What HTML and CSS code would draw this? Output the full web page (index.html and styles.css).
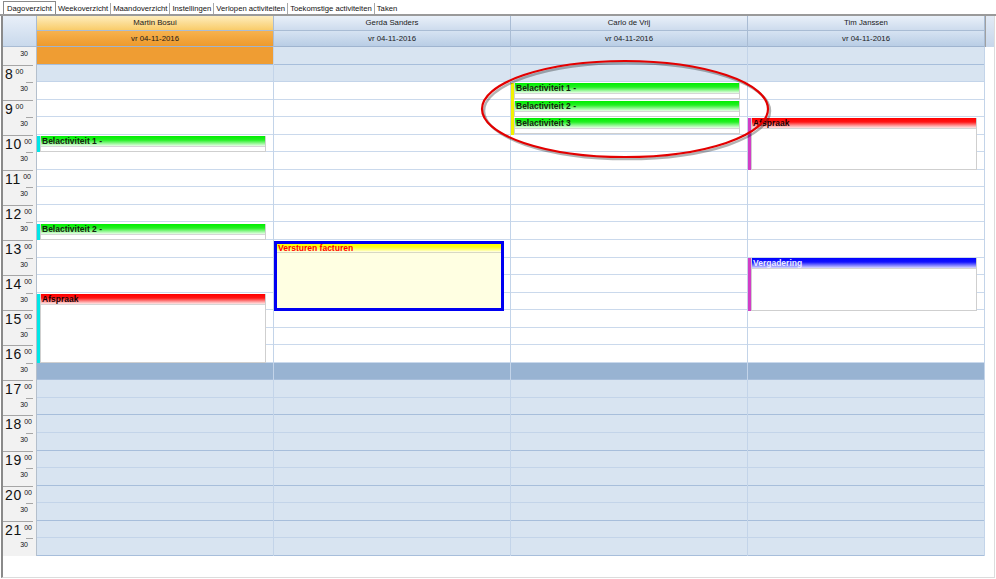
FILE: index.html
```html
<!DOCTYPE html>
<html>
<head>
  <title>Dagoverzicht</title>
  <link rel="stylesheet" href="styles.css">
</head>
<body>
  <div class="tabs">
    <span class="tab active">Dagoverzicht</span>
    <span class="tab">Weekoverzicht</span>
    <span class="tab">Maandoverzicht</span>
    <span class="tab">Instellingen</span>
    <span class="tab">Verlopen activiteiten</span>
    <span class="tab">Toekomstige activiteiten</span>
    <span class="tab">Taken</span>
  </div>

  <div class="cal">
    <div class="head">
      <div class="corner"></div>
      <div class="hcol sel">
        <div class="name">Martin Bosui</div>
        <div class="date">vr 04-11-2016</div>
      </div>
      <div class="hcol">
        <div class="name">Gerda Sanders</div>
        <div class="date">vr 04-11-2016</div>
      </div>
      <div class="hcol">
        <div class="name">Carlo de Vrij</div>
        <div class="date">vr 04-11-2016</div>
      </div>
      <div class="hcol">
        <div class="name">Tim Janssen</div>
        <div class="date">vr 04-11-2016</div>
      </div>
      <div class="hstrip"></div>
    </div>

    <div class="grid">
      <div class="times"></div>

      <!-- Martin -->
      <div class="col">
        <div class="slots" data-sel="1"></div>
        <div class="bar cyan" style="top:89px;height:16px"></div>
        <div class="evt" style="top:89px;height:16px"><div class="t green">Belactiviteit 1 -</div></div>
        <div class="bar cyan" style="top:177px;height:16px"></div>
        <div class="evt" style="top:177px;height:16px"><div class="t green">Belactiviteit 2 -</div></div>
        <div class="bar cyan" style="top:247px;height:69px"></div>
        <div class="evt" style="top:247px;height:69px"><div class="t red">Afspraak</div></div>
      </div>

      <!-- Gerda -->
      <div class="col">
        <div class="slots"></div>
        <div class="evt task" style="top:194px;height:70px"><div class="t yellow">Versturen facturen</div></div>
      </div>

      <!-- Carlo -->
      <div class="col">
        <div class="slots"></div>
        <div class="bar yel" style="top:36px;height:52px"></div>
        <div class="evt" style="top:36px;height:16px"><div class="t green">Belactiviteit 1 -</div></div>
        <div class="evt" style="top:54px;height:16px"><div class="t green">Belactiviteit 2 -</div></div>
        <div class="evt" style="top:71px;height:16px"><div class="t green">Belactiviteit 3</div></div>
      </div>

      <!-- Tim -->
      <div class="col">
        <div class="slots"></div>
        <div class="bar mag" style="top:71px;height:52px"></div>
        <div class="evt" style="top:71px;height:52px"><div class="t red">Afspraak</div></div>
        <div class="bar mag" style="top:211px;height:53px"></div>
        <div class="evt" style="top:211px;height:53px"><div class="t blue">Vergadering</div></div>
      </div>

      <div class="strip"></div>
    </div>
  </div>

  <svg class="mark" width="996" height="579">
    <ellipse cx="627" cy="111" rx="143" ry="48" fill="none" stroke="#000" stroke-opacity="0.3" stroke-width="2.5"/>
    <ellipse cx="625" cy="109" rx="143" ry="48" fill="none" stroke="#e30000" stroke-width="2.2"/>
  </svg>

  <script>
    // half-hour rows from 7:30 to 21:30
    const ROWS = 29;

    document.querySelectorAll('.slots').forEach(col => {
      for (let i = 0; i < ROWS; i++) {
        const s = document.createElement('div');
        s.className = 'slot';
        if (i % 2 === 0) s.classList.add('hl');
        if (i < 2 || i > 18) s.classList.add('off');
        if (i === 18) s.classList.add('dusk');
        if (i === 0 && col.dataset.sel) s.classList.add('sel');
        col.appendChild(s);
      }
    });

    const times = document.querySelector('.times');
    for (let i = 0; i < ROWS; i++) {
      const t = document.createElement('div');
      if (i % 2 === 1) {
        t.className = 'tslot hour';
        t.innerHTML = `<span class="hr">${8 + (i - 1) / 2}</span><span class="mm">00</span>`;
      } else {
        t.className = 'tslot half' + (i === 0 ? ' first' : '');
        t.innerHTML = '<span class="mm">30</span>';
      }
      times.appendChild(t);
    }
  </script>
</body>
</html>
```

FILE: styles.css
```css
* {
  box-sizing: border-box;
}
body {
  margin: 0;
  width: 996px;
  height: 579px;
  overflow: hidden;
  position: relative;
  font-family: "Liberation Sans", Arial, sans-serif;
  background: #fff;
  color: #111;
}

/* tab strip */
.tabs {
  height: 16px;
  display: flex;
  padding-left: 3px;
  border-bottom: 2px solid #9a9a9a;
}
.tab {
  font-size: 7.7px;
  line-height: 11px;
  height: 11px;
  margin-top: 3px;
  padding: 0 2px;
  white-space: nowrap;
}
.tab:not(.active):not(:last-child) {
  border-right: 1px solid #a8a8a8;
}
.tab.active {
  margin-top: 1px;
  height: 13px;
  line-height: 13px;
  padding: 0 3px;
  border: 1px solid #8a8a8a;
  border-bottom: none;
  background: #fff;
}

/* calendar frame */
.cal {
  margin-left: 1px;
  width: 994px;
  height: 562px;
  border-left: 2px solid #8a8a8a;
  border-right: 1px solid #dcdcdc;
  border-bottom: 1px solid #dcdcdc;
}
.head {
  display: flex;
  height: 31px;
}
.corner {
  width: 34px;
  background: linear-gradient(#e8eff8, #c9d9ec);
  border-right: 1px solid #a9bcd4;
  border-bottom: 1px solid #a9bcd4;
}
.hcol {
  width: 237px;
  border-right: 1px solid #a9bcd4;
  font-size: 7.8px;
  text-align: center;
  color: #1a1a1a;
}
.hcol .name {
  height: 15px;
  line-height: 14px;
  background: linear-gradient(#e9f0f9, #cddbed);
  border-bottom: 1px solid #a9bcd4;
}
.hcol .date {
  height: 16px;
  line-height: 15px;
  background: linear-gradient(#d6e3f2, #b9cde5);
  border-bottom: 1px solid #9fb4cf;
}
.hcol.sel .name {
  background: linear-gradient(#feedbd, #f9cc6a);
}
.hcol.sel .date {
  background: linear-gradient(#f6b24e, #ee9a2c);
}
.hstrip {
  width: 9px;
  border-left: 1px solid #a0a0a0;
  background: linear-gradient(#e2eaf5, #c7d6ea);
}

.grid {
  display: flex;
}

/* time column */
.times {
  width: 34px;
  background: #f2f2f2;
  border-right: 1px solid #b4bfcc;
}
.tslot {
  height: 17.55px;
  display: flex;
  align-items: flex-start;
}
.tslot.hour {
  padding: 3px 0 0 2px;
  background: linear-gradient(#a6a6a6, #a6a6a6) no-repeat 0 0 / 30px 1px;
}
.tslot.half {
  justify-content: flex-end;
  padding: 3px 8px 0 0;
  background: linear-gradient(#a6a6a6, #a6a6a6) no-repeat 23px 0 / 7px 1px;
}
.tslot.first {
  background: none;
}
.hr {
  font-size: 14px;
  line-height: 13px;
  letter-spacing: 0.8px;
}
.mm {
  font-size: 7px;
  line-height: 7px;
  margin-left: 2px;
}

/* day columns */
.col {
  width: 237px;
  position: relative;
  border-right: 1px solid #c3d4e9;
}
.slot {
  height: 17.55px;
  border-bottom: 1px solid #cad9ec;
  background: #fff;
}
.slot.off {
  background: #d8e4f1;
  border-bottom-color: #c3d4e9;
}
.slot.off.hl,
.slot.dusk {
  border-bottom-color: #a7bedb;
}
.slot.dusk {
  background: #98b3d2;
}
.slot.sel {
  background: #ef9d33;
  border-bottom-color: #d9a25a;
}
.strip {
  width: 9px;
}

/* appointments */
.bar {
  position: absolute;
  left: 0;
  width: 3px;
}
.cyan { background: #00e6e6; }
.yel { background: #f2f200; }
.mag { background: #d23ec6; }

.evt {
  position: absolute;
  left: 3px;
  width: 226px;
  background: #fff;
  border: 1px solid #cfcfcf;
  border-top: none;
}
.evt .t {
  height: 11px;
  padding-left: 1px;
  font-size: 8.5px;
  font-weight: bold;
  line-height: 11px;
  white-space: nowrap;
  color: #15230f;
  border-bottom: 1px solid #d6d6d6;
}
.t.green {
  background: linear-gradient(#00ee00 0%, #22f022 40%, #a8f8a8 80%, #e6ffe6 100%);
}
.t.red {
  background: linear-gradient(#ff0000 0%, #ff1616 40%, #ffb0b0 82%, #ffe4e4 100%);
  color: #1a0000;
}
.t.blue {
  background: linear-gradient(#0000ff 0%, #1212ff 40%, #9a9aff 82%, #d8d8ff 100%);
  color: #eeeeff;
}
.t.yellow {
  height: 9px;
  line-height: 9px;
  background: linear-gradient(#ffff00 0%, #ffff22 40%, #ffffa8 82%, #fffff0 100%);
  color: #ff0000;
  border-bottom-color: #d8d8c4;
}
.evt.task {
  left: 0;
  width: 230px;
  background: #ffffe2;
  border: 3px solid #0000f2;
}

/* red marker drawn over the screenshot */
.mark {
  position: absolute;
  left: 0;
  top: 0;
  pointer-events: none;
}
```
